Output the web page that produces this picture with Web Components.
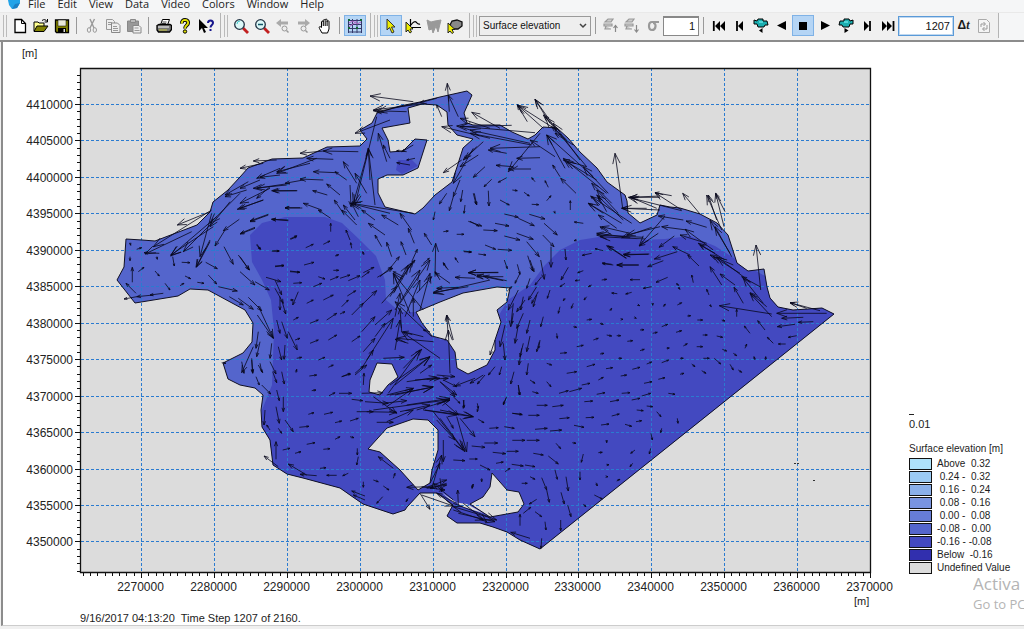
<!DOCTYPE html>
<html lang="en">
<head>
<meta charset="utf-8">
<title>Surface elevation viewer</title>
<style>
html,body{margin:0;height:100%}
body{font-family:"Liberation Sans",Arial,sans-serif;font-size:11px;color:#1c1c1c;background:#f0f0f0}
</style>
</head>
<body>
<result-viewer></result-viewer>
<script>
class Base extends HTMLElement {
  paint(html){ this.attachShadow({mode:'open'}).innerHTML = html; }
}

/* ---------- icons, 16 x 16 ---------- */
const ICONS = {
  new:['New','<path d="M3 1.5h6.500l4 4v9H3z" fill="#fff" stroke="#000" stroke-width="1.300"/><path d="M9.500 1.500v4h4" fill="none" stroke="#000"/>'],
  open:['Open','<path d="M1 13V4h4l1 1h5v3" fill="#ffff90" stroke="#000"/><path d="M1 13.500l3-5.500h11l-4 5.500z" fill="#808000" stroke="#000"/><path d="M9 2.500c2-1.500 4-1 5 1M14.500 1v3h-3" fill="none" stroke="#000"/>'],
  save:['Save','<path d="M1.500 2h13v12.500h-12l-1-1z" fill="#808000" stroke="#000" stroke-width="1.300"/><path d="M4 2h8v6H4z" fill="#e8e8d8" stroke="#000" stroke-width=".5"/><path d="M4 10h8v4.500H4z" fill="#000"/><path d="M9.500 11h1.500v3H9.500z" fill="#ddd"/>'],
  cut:['Cut','<path d="M6 1l4 9M10.500 1L6 10" stroke="#999" stroke-width="1.400" fill="none"/><ellipse cx="5" cy="12" rx="1.700" ry="2.300" fill="none" stroke="#999"/><ellipse cx="10.800" cy="12" rx="1.700" ry="2.300" fill="none" stroke="#999"/>'],
  copy:['Copy','<path d="M1.500 1.500h6l2 2v8h-8z" fill="#eee" stroke="#999"/><path d="M6.500 5h6l2.500 2.500v7H6.500z" fill="#eee" stroke="#888"/><path d="M3 4.500h4M3 6.500h3M8 8.500h4M8 10.500h5M8 12.500h5" stroke="#999"/>'],
  paste:['Paste','<path d="M1.500 3h11v10.500h-11z" fill="#999" stroke="#888"/><path d="M4.500 1.500h5v3h-5z" fill="#bbb" stroke="#888"/><path d="M7 7.500h6l2 2v5.500H7z" fill="#eee" stroke="#888"/><path d="M8.500 10h4M8.500 12.500h5" stroke="#999"/>'],
  print:['Print','<path d="M4.500 7l2-5.500h7l-2 5.500z" fill="#fff" stroke="#000"/><path d="M1 7.500l2-1h11l1.500 1v4l-2 2.500H2.500L1 12z" fill="#777" stroke="#000" stroke-width="1.300"/><path d="M2 9h11" stroke="#fff"/><path d="M6.500 4h4M6 5.500h4" stroke="#000" stroke-width=".7"/><path d="M3 12h8" stroke="#bb4" stroke-width="1.200"/>'],
  help:['Help','<path d="M5 5.500C4.500 2.500 6.500 2 8 2c2.500 0 3.500 1.500 3 3.500C10.500 7.500 8 7.500 8 10.500" fill="none" stroke="#000" stroke-width="3.800"/><path d="M5 5.500C4.500 2.500 6.500 2 8 2c2.500 0 3.500 1.500 3 3.500C10.500 7.500 8 7.500 8 10.500" fill="none" stroke="#e0e000" stroke-width="1.900"/><circle cx="8" cy="13.500" r="1.700" fill="#dd0" stroke="#000"/>'],
  what:['Context help','<path d="M1 1v12l3-3 2 5 2-1-2-4h4z" fill="#000"/><path d="M10 5c0-2 1-2.500 2.500-2.500S15 3.500 15 5c0 2-2.500 2-2.500 4.500M12.500 11v2" fill="none" stroke="#15158c" stroke-width="2"/>'],
  zin:['Zoom in','<path d="M10 10l5 5" stroke="#c22020" stroke-width="2.800"/><circle cx="6.500" cy="6.500" r="4.800" fill="#dcf8f8" stroke="#234" stroke-width="1.300"/><path d="M4 6a3 3 0 0 1 3-3" stroke="#4cc" fill="none"/>'],
  zout:['Zoom out','<path d="M10 10l5 5" stroke="#c22020" stroke-width="2.800"/><circle cx="6.500" cy="6.500" r="4.800" fill="#dcf8f8" stroke="#234" stroke-width="1.300"/><path d="M4 6.500h5" stroke="#156" stroke-width="1.500"/>'],
  zback:['Previous zoom','<path d="M1 5l5-4v2.500h7v3H6V9z" fill="#aaa"/><circle cx="9.500" cy="10.500" r="2.500" fill="#eee" stroke="#999"/><path d="M11.500 12.500l2 2" stroke="#999" stroke-width="1.500"/>'],
  zfwd:['Next zoom','<path d="M14 5L9 1v2.500H2v3h7V9z" fill="#aaa"/><circle cx="7.500" cy="10.500" r="2.500" fill="#eee" stroke="#999"/><path d="M9.500 12.500l2 2" stroke="#999" stroke-width="1.500"/>'],
  hand:['Pan','<path d="M5 15L2.500 10.500C1.500 8.500 3 8 4.500 9.500V4c0-1.200 1.800-1.200 1.800 0V2.500c0-1.200 1.900-1.200 1.900 0V2c0-1.200 1.900-1.200 1.900 0v1.500c0-1 1.900-1 1.900 0V11l-1.500 4z" fill="#fff" stroke="#000"/><path d="M6.300 4v4M8.200 3v5M10.100 3v5" stroke="#000"/>'],
  grid:['Grid','<path d="M1.500 1v14M5.500 1v14M10 1v14M14.500 1v14M1 2.500h14M1 6.500h14M1 10.500h14M1 14h14" stroke="#33386a"/><path d="M2 5l4-2 4 3 4-2M2 9l8-6" stroke="#b35bc0" fill="none"/><path d="M1 1h2v2H1zM13 1h2v2h-2zM1 9h2v2H1zM9 9h2v2H9z" fill="#163"/>'],
  ptr:['Select','<path d="M4 1v11l2.500-2.500L9 15l2-1-2.500-5H12z" fill="#ee0" stroke="#333"/>'],
  series:['Time series','<path d="M5.500 1v10M5 9.500h11M6 7c2-3 4-4 5-3s2 3 4 2" stroke="#000" stroke-width="1.200" fill="none"/><path d="M1 4v10l2-2 2 3 1.500-1-1.500-3h3z" fill="#ee0" stroke="#222"/>'],
  profile:['Profile','<path d="M1 2l4 2 4-1 6-1-3 12-2-6-3 7-1-4-3 1z" fill="#999" stroke="#999"/>'],
  area:['Area','<path d="M3 7l2-4 5-1 5 2v4l-4 3H5z" fill="#888" stroke="#111" stroke-width="1.300"/><path d="M1 5v10l2-2 2 2.500 1.500-1-1.500-3h3z" fill="#ee0" stroke="#222"/>'],
  up:['Layer up','<path d="M2 4l3-3h5L8 4zM1 6h8v2H1zM3 8l-1 3h6" fill="#ccc" stroke="#999" stroke-width="1.200"/><path d="M12.500 14V8M10.500 10l2-2.500 2 2.500" fill="none" stroke="#888" stroke-width="1.200"/>'],
  down:['Layer down','<path d="M2 4l3-3h5L8 4zM1 6h8v2H1zM3 8l-1 3h6" fill="#ccc" stroke="#999" stroke-width="1.200"/><path d="M12.500 7v6M10.500 11.500l2 2.500 2-2.500" fill="none" stroke="#888" stroke-width="1.200"/>'],
  sigma:['Sigma layer','<path d="M14 4H7C3 4 3 12 7 12s5-7 1-7" fill="none" stroke="#999" stroke-width="2.200"/>'],
  first:['First step','<path d="M2.800 3v10" stroke="#000" stroke-width="1.800"/><path d="M9 3v10L4 8zM14 3v10L9 8z"/>'],
  prev:['Previous step','<path d="M5 3v10" stroke="#000" stroke-width="1.800"/><path d="M11 3v10L6 8z"/>'],
  recback:['Record backward','<path d="M1 2l3 1 1-2h5v2h4l1 4h-3l-1 2H5L4 6H1z" fill="#1aaeb0" stroke="#000"/><path d="M6 4h4" stroke="#8ff"/><path d="M9.500 10v5L6 12.500z"/>'],
  rev:['Play backward','<path d="M12 3v9L3 7.500z"/>'],
  stop:['Stop','<path d="M4 4h8v8H4z"/>'],
  play:['Play','<path d="M4 3v9l9-4.500z"/>'],
  recfwd:['Record forward','<path d="M15 2l-3 1-1-2H6v2H2L1 7h3l1 2h6l1-3h3z" fill="#1aaeb0" stroke="#000"/><path d="M6 4h4" stroke="#8ff"/><path d="M6.500 10v5l4-2.500z"/>'],
  next:['Next step','<path d="M11 3v10" stroke="#000" stroke-width="1.800"/><path d="M5 3v10l5-5z"/>'],
  last:['Last step','<path d="M13.500 3v10" stroke="#000" stroke-width="1.800"/><path d="M2 3v10l5-5zM7 3v10l5-5z"/>'],
  refresh:['Refresh','<path d="M2.500 1.500h8l3 3v10h-11z" fill="#f4f4f4" stroke="#aaa"/><path d="M5 9V6h4M7.500 4L9.500 6 7.500 8M11 7v4H7M8.500 9l-2 2 2 2" fill="none" stroke="#999"/>']
};

customElements.define('tool-button', class extends Base {
  connectedCallback(){
    const [label, art] = ICONS[this.getAttribute('icon')];
    const on = this.hasAttribute('active');
    this.paint(`<style>
      :host{display:block;flex:none}
      button{display:grid;place-items:center;width:21px;height:21px;padding:0;border:1px solid transparent;background:none}
      button.on{width:22px;background:#b5d5f5;border-color:#7fb2e6}
      svg{display:block}
    </style><button class="${on?'on':''}" title="${label}" aria-label="${label}"><svg width="16" height="16" viewBox="0 0 16 16">${art}</svg></button>`);
  }
});

customElements.define('tool-group', class extends Base {
  connectedCallback(){
    this.paint(`<style>
      :host{display:flex;align-items:center;flex:none;height:25px;padding-right:4px;border-right:1px solid #b4b4b4}
      .grip{width:2px;height:22px;margin:0 2px 0 3px;border:solid #bbb;border-width:0 1px}
    </style><span class="grip"></span><slot></slot>`);
  }
});

customElements.define('tool-rule', class extends Base {
  connectedCallback(){
    this.paint(`<style>:host{display:block;width:1px;height:17px;margin:0 4px;background:#999}</style>`);
  }
});

customElements.define('menu-bar', class extends Base {
  connectedCallback(){
    const items = ['File','Edit','View','Data','Video','Colors','Window','Help'];
    this.paint(`<style>
      :host{display:block;height:12px;background:#f5f6f7;border-bottom:1px solid #e9e9e9}
      nav{display:flex;gap:12px;height:8px;padding-left:8px}
      svg{display:block;margin-right:-4px}
      button{border:0;padding:0;background:none;font:11px/8px "Open Sans","Noto Sans",sans-serif;color:#222;height:8px;overflow:visible}
    </style><nav><svg width="12" height="9" viewBox="0 0 12 9"><path d="M0 0h12v3L9 8 4 9 1 5z" fill="#22a3e8"/><path d="M4 9L9 8l3-5-5 1z" fill="#1b7fc4"/></svg>${items.map(t=>`<button>${t}</button>`).join('')}</nav>`);
  }
});

customElements.define('tool-bar', class extends Base {
  connectedCallback(){
    const b = s => s.split(' ').map(n => n==='|' ? '<tool-rule></tool-rule>' :
      `<tool-button icon="${n.replace('*','')}" ${n.includes('*')?'active':''}></tool-button>`).join('');
    this.paint(`<style>
      :host{display:flex;height:27px;background:#f5f6f7;border-bottom:2px solid #8c8c8c;overflow:hidden}
      .bar{display:flex;align-items:flex-start;background:#f0f0f0}
      .pick{display:grid;align-items:center;width:112px}
      select,.pick svg{grid-area:1/1}
      select{appearance:none;height:20px;width:112px;padding:0 3px;border:1px solid #9a9a9a;border-radius:0;background:#eee;font:10px "Liberation Sans",Arial,sans-serif;color:#111}
      .pick svg{justify-self:end;margin-right:4px;pointer-events:none}
      input{box-sizing:border-box;height:20px;width:36px;padding:0 3px;border:1px solid #888;border-top-width:2px;background:#fff;font:11px "Liberation Sans",Arial,sans-serif;text-align:right;color:#111}
      .step{width:56px;border:1px solid #5a9ad8;outline:1px solid #c0d8f0;outline-offset:-2px}
      .dt{width:19px;text-align:center;font-size:12px;font-weight:bold}
      i{font-family:"Liberation Serif",serif}
    </style>
    <div class="bar">
      <tool-group>${b('new open save | cut copy paste | print help what')}</tool-group>
      <tool-group>${b('zin zout zback zfwd hand | grid*')}</tool-group>
      <tool-group>${b('ptr* series profile area')}</tool-group>
      <tool-group>
        <div class="pick"><select aria-label="Item"><option>Surface elevation</option></select>
        <svg width="8" height="6" viewBox="0 0 8 6"><path d="M1 1l3 3 3-3" fill="none" stroke="#444" stroke-width="1.500"/></svg></div>
        ${b('| up down sigma')}<input aria-label="Layer" value="1">
        ${b('| first prev recback rev stop* play recfwd next last')}
        <input class="step" aria-label="Time step" value="1207"><span class="dt">Δ<i>t</i></span>${b('refresh')}
      </tool-group>
    </div>`);
  }
});

/* ---------- flow vectors: tiles with an origin; tail and head in thirds of a unit ---------- */
const TILES = [
[100,180,`275 155 135 222,330 95 232 135,335 90 160 200,340 140 212 225,330 180 288 262,335 100 300 230,350 110 212 228,178 220 132 218,90 188 92 196,110 208 125 203,97 307 97 262,115 275 132 262,108 340 78 310,190 340 150 345,160 345 110 350,110 350 72 357,165 273 178 288,195 310 210 330,240 317 252 310,255 288 272 296,292 307 312 310,218 230 223 258,245 247 270 248,170 230 172 238,90 230 90 242,317 247 352 266,325 285 350 312,355 320 412 333,372 200 400 253,415 225 448 270,420 275 465 315,465 305 508 330,498 292 543 305,418 118 370 152,375 150 345 198,505 105 450 125,465 142 422 160,388 350 430 375,415 355 460 388,445 352 485 392,472 405 520 475,475 378 520 475,525 325 550 370,545 360 557 402,545 425 562 475,565 455 592 510,475 455 468 505,480 485 470 530,460 500 425 578,455 535 458 578,475 555 488 578,555 495 552 538,515 490 510 535,510 545 528 582,595 335 578 375,470 195 480 208,515 213 537 213,525 260 552 257,572 178 590 170,570 275 598 277,570 10 470 25,592 32 520 33,510 20 470 55,490 60 412 88,440 30 375 50,390 65 330 140,420 40 330 130,330 185 290 260,335 130 250 215,445 5 375 45,600 83 555 83,565 120 515 118,365 548 378 550`],
[240,80,`520 65 390 48,500 95 400 92,540 68 410 95,590 55 540 68,560 70 400 90,450 120 345 160,410 110 345 375,385 210 340 370,440 245 415 160,450 400 330 370,520 400 335 370,330 315 333 380,355 410 335 370,405 375 385 205,390 300 385 205,350 310 310 245,380 340 345 280,450 235 430 195,655 110 625 45,628 95 622 10,605 110 590 75,500 215 470 212,520 195 485 215,525 235 500 240,510 255 470 248,355 215 250 213,260 212 180 220,280 238 200 235,230 235 110 280,210 250 110 275,110 240 40 243,70 250 0 265,120 285 60 292,290 278 220 275,320 300 285 275,250 300 180 297,190 300 135 310,140 315 40 325,170 332 95 332,262 345 218 332,300 345 260 312,310 400 283 360,350 435 305 390,345 420 310 375,405 420 365 390,475 435 425 405,435 465 385 430,425 500 405 465,455 530 440 487,515 450 480 400,523 490 505 445,498 525 483 485,245 390 190 370,272 415 235 390,272 455 272 430,330 480 318 450,335 505 332 488,187 384 135 384,145 422 95 418,85 403 30 423,45 445 0 462,50 492 62 508,97 513 118 513,150 477 170 467,197 503 220 493,250 493 270 483,285 528 296 524,372 525 368 515,105 558 132 556,192 555 222 547,150 573 180 577,235 590 255 597,280 571 296 571,300 595 330 585,370 578 402 562,420 590 455 560,450 565 478 530,550 550 568 535,515 545 532 508,585 590 587 490,575 495 553 460,500 570 525 540,480 600 520 545,490 590 460 575,600 600 585 575,0 530 28 570,120 265 50 295,60 300 0 325,90 325 0 370,70 360 0 385,610 455 625 453,650 463 672 463,690 424 716 438,672 515 693 517,655 548 645 533,625 570 610 548,700 340 708 372,675 375 672 400,668 330 662 365,640 350 628 392,660 300 640 350,585 395 580 420,620 340 598 372,665 240 610 278,700 205 640 310,715 225 660 260`],
[440,80,`215 136 60 140,180 145 95 97,150 145 60 115,150 175 5 140,285 158 50 138,270 190 90 150,275 195 90 160,300 200 150 205,200 220 145 210,345 230 270 180,300 160 205 275,273 267 205 267,300 233 230 235,220 260 168 256,310 145 232 75,262 125 232 75,350 150 232 75,330 130 285 58,350 150 285 58,360 155 310 105,380 180 335 140,400 195 345 160,440 260 315 110,420 240 340 130,460 290 320 165,375 265 320 165,440 260 370 240,500 340 370 235,470 300 380 245,360 290 338 255,408 340 362 295,505 340 430 260,515 370 455 310,480 375 452 348,500 395 475 350,550 420 470 345,545 430 445 370,490 400 445 370,575 430 455 350,530 445 475 405,570 460 485 440,515 465 480 440,550 470 470 460,610 472 470 465,548 385 525 220,535 400 470 330,620 385 545 385,660 390 545 385,660 352 568 352,650 385 572 352,558 535 500 497,625 523 550 523,597 555 530 555,515 553 487 549,655 460 598 498,660 440 560 465,490 512 465 506,455 520 427 526,430 572 413 578,430 430 403 426,391 390 391 362,320 362 333 347,325 322 315 302,285 305 275 293,200 293 175 307,155 298 132 320,135 260 100 292,103 340 110 375,145 332 147 378,180 360 208 375,217 330 232 332,252 337 268 348,275 373 296 374,193 402 235 412,268 403 315 417,235 415 283 437,312 430 352 465,165 430 207 438,85 424 125 438,130 450 172 452,230 460 280 478,193 468 240 480,308 465 342 500,260 485 298 530,333 500 333 562,375 507 378 540,135 495 167 508,173 508 215 511,70 513 95 516,115 522 138 525,263 527 278 573,302 540 313 598,193 540 202 566,232 553 240 583,385 562 363 600,175 577 85 578,190 590 110 590,130 185 75 235,110 200 70 240,343 395 345 400,410 480 402 482`],
[600,140,`245 212 85 172,180 168 90 172,215 167 165 158,245 210 165 158,300 222 248 160,365 270 320 165,372 260 347 160,350 240 325 165,375 215 347 160,155 262 65 293,135 297 0 290,195 228 118 317,250 240 175 228,260 270 185 260,320 262 258 243,223 288 177 322,148 342 72 345,115 375 52 375,40 375 8 371,80 355 25 318,232 335 163 357,190 362 143 380,270 345 218 320,297 378 263 345,320 310 240 285,340 330 255 268,345 340 300 315,375 360 295 310,390 340 330 240,395 350 345 260,400 375 330 345,420 400 340 350,450 425 350 350,365 435 330 380,405 435 360 402,430 490 402 442,480 440 425 410,490 490 430 415,500 500 450 458,515 530 450 460,482 450 468 315,280 428 275 405,327 465 320 448,120 419 90 419,203 412 168 427,155 440 130 445,95 457 77 462,52 461 35 459,232 495 245 488,190 500 196 492,228 430 236 436,235 442 240 448,330 495 334 500,115 495 119 497,65 538 69 538,105 533 109 535,30 512 35 505,158 490 158 496,515 522 358 497,620 505 570 488,660 512 570 488,680 520 530 520,610 532 545 535,640 545 595 547,585 553 532 560,590 587 565 592,557 612 535 612,520 610 502 592,495 570 473 542,450 580 433 558,410 530 410 508,185 560 203 553,158 580 172 577,228 577 245 572,120 570 132 569,262 528 272 527,292 540 308 540,365 540 375 543,250 618 262 611,290 620 308 620,200 625 208 624,120 632 133 628,82 604 98 602,50 587 62 587,367 628 380 633,350 588 368 592,308 585 322 585,185 668 206 660,240 655 250 655,310 655 328 655,343 655 362 672,390 673 400 690,140 672 155 666,97 688 120 682,55 655 65 655,18 686 38 683,62 708 80 705,175 718 195 713,305 692 318 700,240 703 252 700,435 625 440 612,497 660 497 650,400 640 410 647,465 660 462 650,415 690 425 697,275 672 285 680,0 642 12 640,0 550 10 553,20 585 35 588,5 420 20 418`],
[340,260,`25 62 60 47,22 108 47 92,65 52 88 35,112 52 158 25,65 135 110 92,35 165 70 130,0 162 15 155,65 215 105 170,105 195 155 150,35 245 60 228,70 275 105 235,45 340 70 318,65 325 100 270,105 230 135 190,80 300 160 175,5 350 32 342,125 130 170 80,160 100 215 10,165 150 240 30,150 110 205 15,180 130 270 0,165 170 180 100,250 150 160 40,210 160 160 40,275 230 165 125,185 215 180 145,165 270 180 180,220 170 220 115,195 170 240 60,240 150 270 40,280 245 170 235,250 230 190 215,300 295 185 215,205 250 165 238,230 100 275 50,330 70 285 38,270 215 250 210,330 340 325 210,340 240 320 165,325 230 320 165,475 38 385 38,405 55 345 52,490 62 410 45,500 62 430 48,450 60 280 100,385 80 280 97,355 82 290 85,320 25 310 10,130 295 193 292,145 400 240 270,150 375 270 290,165 375 270 290,190 325 245 268,225 360 300 355,240 340 275 315,290 345 345 350,405 355 345 378,300 365 345 410,140 440 220 385,165 405 280 380,200 435 330 415,70 375 72 340,430 345 390 370,435 345 412 372,485 320 478 345,465 320 445 345,490 250 495 300,465 240 450 285,500 95 515 80,535 90 505 150,555 120 530 155,590 80 565 120,595 95 575 130,520 130 512 200,550 160 530 205,535 195 525 250,495 195 480 260,520 160 515 190,570 228 560 275,545 265 537 315,598 245 590 275,522 335 512 372,565 310 560 345,535 375 540 405,500 410 490 432,370 420 373 442,412 430 415 445,570 0 582 35,540 40 525 70`],
[240,360,`5 5 12 40,35 0 38 40,60 10 65 35,48 50 58 75,65 75 92 102,98 35 110 68,125 35 133 72,110 90 118 122,130 110 130 155,108 140 118 190,135 180 160 215,75 150 72 195,108 298 108 245,128 270 150 265,165 280 183 275,205 163 222 158,252 163 278 157,178 202 207 199,200 253 225 248,285 188 305 183,330 183 355 175,285 238 300 230,250 268 270 266,297 100 335 100,335 118 368 122,215 92 228 90,267 107 285 98,208 48 230 45,305 50 330 40,265 22 280 15,345 45 380 15,168 38 170 28,330 230 342 233,352 265 352 285,355 290 350 315,365 100 428 98,350 155 400 155,380 155 470 157,400 110 470 160,375 125 445 130,430 130 500 122,440 105 520 85,450 105 578 82,440 185 520 150,410 187 460 187,480 155 570 135,400 150 620 120,530 150 630 120,590 130 630 120,555 150 700 170,550 150 650 165,600 150 700 170,500 65 590 52,560 58 625 55,610 60 650 80,600 65 650 105,640 110 660 130,610 125 655 165,580 155 670 270,600 175 675 275,620 170 640 205,650 170 680 275,660 175 705 230,590 180 645 240,610 240 610 305,672 120 670 145,715 140 712 155,715 178 732 188,748 205 775 203,793 200 823 205,817 160 845 163,817 241 855 241,860 241 898 241,733 249 773 249,695 258 735 262,640 300 675 302,688 297 712 297,758 277 797 281,800 274 835 274,720 315 750 330,768 310 790 306,815 313 850 318,855 315 885 320,200 345 145 312,230 347 180 343,240 325 258 323,290 346 260 346,325 340 308 347,115 320 72 288,115 205 125 220,90 210 80 195,400 360 415 365,430 378 447 390,460 355 465 340,370 365 370 382,460 325 415 290,375 408 335 393,375 420 340 405,428 410 410 430,505 415 498 425,540 400 570 448,580 380 500 382,545 405 640 438,570 370 600 310,575 385 605 285,565 380 620 360,560 385 620 375,545 380 615 390,640 420 580 370,650 430 590 400,600 355 605 395,640 430 770 480,670 430 740 485,640 450 730 480,655 460 765 485,655 435 653 390,740 470 640 440,620 370 570 385,695 385 700 372`],
[440,380,`290 76 322 76,337 80 370 76,357 40 385 32,388 35 425 25,433 65 458 63,470 43 495 38,545 40 570 38,510 65 537 60,605 48 632 40,612 10 636 5,575 60 600 55,590 90 610 92,515 108 538 102,437 113 462 112,358 116 388 113,402 136 432 142,483 135 507 132,555 133 575 139,588 125 605 122,330 153 365 150,285 148 322 145,217 100 247 104,265 106 298 106,650 95 663 110,620 78 638 80,665 145 662 158,633 160 637 180,632 205 628 222,585 210 572 220,500 180 500 188,397 188 408 190,348 190 362 206,280 220 310 225,325 228 355 252,430 222 424 247,420 275 420 300,345 270 352 298,378 290 385 333,305 293 320 330,320 330 328 367,363 337 373 372,383 375 393 410,270 290 285 298,315 425 318 450,362 420 362 452,285 395 305 410,240 437 240 403,250 400 272 382,290 358 268 372,245 310 262 310,270 475 212 457,305 475 303 505,475 218 487 217,468 308 472 318,463 345 487 357,430 373 438 380,578 250 570 260,530 303 540 298,500 255 507 254,125 295 125 305,97 315 97 325,195 275 210 265,685 40 705 43,712 115 714 130,235 15 238 45,277 35 295 40,198 55 190 75,320 5 333 20,500 290 504 290`],
[510,270,`60 25 50 55,95 20 75 45,40 80 32 120,80 75 70 110,120 60 112 85,165 40 150 50,210 30 195 32,60 150 50 190,100 140 92 170,150 110 145 130,190 100 184 115,230 80 222 90,40 220 30 260,90 210 86 235,140 190 142 205,190 170 200 172,230 150 245 148,110 280 125 285,150 250 170 248,200 230 220 226,250 210 265 205,170 310 200 305,230 290 255 283,60 330 75 340,215 345 240 340,265 330 280 322,245 45 235 50,165 85 160 92`],
[270,270,`15 30 35 75,30 80 30 120,70 40 95 38,130 50 155 40,180 30 205 20,60 90 70 90,110 100 130 90,160 90 190 75,20 150 30 190,70 150 85 142,120 160 145 150,170 150 200 130,215 110 235 90,25 230 35 270,75 210 90 205,120 220 145 210,175 210 200 195,80 265 95 262,145 270 165 262`]
];

const pts = a => a.trim().split(/\s+/).map(p => p.replace(',', ' ')).join(' L');
const COAST = '126,239 142,240 155,241 197,225 210,212 213,202 228,190 240,177 248,168 272,159 303,158 327,147 360,146 367,139 360,130 372,123 377,113 400,106 420,102 440,97 467,91 472,95 464,113 467,123 473,125 500,125 512,132 528,139 535,135 543,127 557,128 568,138 580,152 597,168 607,182 625,195 627,201 628,213 640,223 657,215 660,205 670,207 680,208 700,214 717,223 728,235 737,263 748,271 764,269 767,287 770,298 778,307 793,310 822,308 834,314 540,549 520,540 507,532 493,527 480,523 457,523 447,516 453,505 437,493 420,493 407,507 405,510 393,514 363,504 350,495 340,488 303,478 287,474 273,465 270,440 262,427 261,410 263,395 255,388 240,385 228,379 223,363 243,353 252,342 253,323 245,310 208,290 190,289 178,296 135,303 117,280 124,267';
const ISLANDS = [
  '410,123 408,108 422,104 437,105 447,112 448,125 457,135 473,139 463,148 457,167 452,182 435,195 423,208 415,214 385,207 378,193 378,179 387,175 403,175 418,168 427,140 415,139 403,151 390,152 388,140 382,128',
  '416,312 440,302 463,293 497,287 510,288 507,302 497,310 501,322 495,340 495,350 487,365 468,374 457,368 455,352 447,340 432,336 422,323',
  '377,363 392,364 398,377 388,385 380,395 369,392 370,380',
  '368,449 387,428 413,419 428,420 438,430 438,450 432,470 430,483 418,490 400,470 380,452',
  '492,473 507,490 519,492 524,504 518,512 490,517 470,504 483,497 490,487'
];

customElements.define('flow-map', class extends Base {
  connectedCallback(){
    let grid = '', ticks = '', labels = '', vec = '';
    for (let i = 0; i < 11; i++) {
      const x = Math.round(141 + i * 72.9) + .5;
      if (i < 10) grid += `M${x} 68V572`;
      labels += `<text x="${x - 1}" y="591" text-anchor="middle">${2270000 + i * 10000}</text>`;
    }
    for (let i = 0; i < 13; i++) {
      const y = Math.round(104 + i * 36.45) + .5;
      grid += `M81 ${y}H870`;
      labels += `<text x="73" y="${y + 4}" text-anchor="end">${4410000 - i * 5000}</text>`;
    }
    for (let i = -8; i <= 100; i++) ticks += `M${Math.round(141 + i * 7.29) + .5} 572v${i % 10 ? 4 : 6}`;
    for (let i = -4; i <= 64; i++) ticks += `M81 ${Math.round(104 + i * 7.29) + .5}h${i % 5 ? -4 : -6}`;
    for (const [ox, oy, list] of TILES) for (const s of list.split(',')) {
      const [a, b, c, d] = s.split(' ').map((v, k) => +v / 3 + (k % 2 ? oy : ox));
      const len = Math.hypot(c - a, d - b), t = Math.atan2(d - b, c - a), h = Math.min(Math.max(len * .27, 2.5), 11), w = .34;
      const f = v => v.toFixed(1);
      vec += `M${f(a)} ${f(b)}L${f(c)} ${f(d)}M${f(c - h * Math.cos(t - w))} ${f(d - h * Math.sin(t - w))}L${f(c)} ${f(d)}L${f(c - h * Math.cos(t + w))} ${f(d - h * Math.sin(t + w))}`;
    }
    this.paint(`<style>
      :host{display:block}
      svg{display:block;width:100%;height:auto}
      text{font:12px "Liberation Sans",Arial,sans-serif;fill:#222}
      .unit{font-size:11px}
    </style>
    <svg viewBox="3 42 897 570" role="img" aria-label="Surface elevation with flow vectors">
      <defs><clipPath id="sea"><path d="M${pts(COAST)}Z"/></clipPath></defs>
      <path d="M81 68H870V572H81z" fill="#dcdcdc"/>
      <path d="M${pts(COAST)}Z" fill="#5465cc"/>
      <g clip-path="url(#sea)" fill="#4349c0">
        <path d="M250 235L262 223L285 217L325 217L342 223L360 240L376 256L385 280L386 300L400 312L416 312L440 340L490 330L508 300L530 285L545 265L560 250L580 240L605 236L625 235L640 240L665 239L690 236L715 246L740 262L790 290L850 300L850 570L250 570L262 410L272 385L274 330L271 300L262 280L252 262Z"/>
        <path d="M398 160l14 0l6 6l-16 8l-6-4z"/>
      </g>
      <path d="M${ISLANDS.map(pts).join('ZM')}Z" fill="#dcdcdc"/>
      <path d="M441 492l12 10 14 2 16 9-20-6z" fill="#dcdcdc"/>
      <path d="${grid}" fill="none" stroke="#2a7bd0" stroke-dasharray="3 2"/>
      <path d="M${pts(COAST)}ZM${ISLANDS.map(pts).join('ZM')}Z" fill="none" stroke="#101025"/>
      <path d="${vec}" fill="none" stroke="#08081c" stroke-width=".8" stroke-linejoin="bevel"/>
      <path d="M794 463.500h2M797 463.500h2M813 480.500h2" stroke="#333"/>
      <path d="M80.500 68.500H870.500V572.500H80.500z" fill="none" stroke="#111" stroke-width="1.300"/>
      <path d="${ticks}" stroke="#111"/>
      ${labels}
      <text class="unit" x="22" y="57">[m]</text>
      <text class="unit" x="854" y="605">[m]</text>
    </svg>`);
  }
});

customElements.define('map-legend', class extends Base {
  connectedCallback(){
    const rows = [['#aee2fb','Above  0.32'],['#9ccbf4',' 0.24 -  0.32'],['#8bb0ea',' 0.16 -  0.24'],['#7994e0',' 0.08 -  0.16'],['#667cd6',' 0.00 -  0.08'],['#5465cc','-0.08 -  0.00'],['#4349c0','-0.16 - -0.08'],['#312fae','Below  -0.16'],['#dcdcdc','Undefined Value']];
    this.paint(`<style>
      :host{display:block;font-size:10px;line-height:13px;white-space:pre}
      .scale{display:block;font-size:11px;margin-bottom:11px}
      .scale::before{content:"";display:block;width:5px;height:1px;background:#222;margin-bottom:3px}
      h2{margin:0 0 2px;font:inherit}
      ul{list-style:none;margin:0;padding:0}
      li{display:flex;align-items:center;gap:5px;height:13px}
      .key{box-sizing:border-box;width:23px;height:12px;border:1px solid #111}
    </style><span class="scale">0.01</span><h2>Surface elevation [m]</h2><ul>${rows.map(([c,t])=>`<li><span class="key" style="background:${c}"></span><span>${t}</span></li>`).join('')}</ul>`);
  }
});

customElements.define('result-viewer', class extends Base {
  connectedCallback(){
    this.paint(`<style>
      :host{display:flex;flex-direction:column;min-height:100%;position:relative}
      main{background:#fff;margin-left:1px;border-left:2px solid #8c8c8c;border-bottom:1px solid #ccc}
      .row{display:flex}
      flow-map{flex:1;min-width:0}
      map-legend{flex:none;width:115px;padding-left:9px;align-self:flex-end;margin-bottom:38px}
      .status{margin:0;padding-left:77px;line-height:13px;white-space:pre}
      .mark{position:absolute;right:0;width:51px;bottom:15px;overflow:hidden;white-space:nowrap;color:#b4b4b4;font:13px/20px "Open Sans",sans-serif}
      .mark b{display:block;font-weight:normal;font-size:17px}
    </style>
    <menu-bar></menu-bar>
    <tool-bar></tool-bar>
    <main>
      <div class="row"><flow-map></flow-map><map-legend></map-legend></div>
      <p class="status">9/16/2017 04:13:20  Time Step 1207 of 2160.</p>
    </main>
    <div class="mark"><b>Activa</b>Go to PC</div>`);
  }
});
</script>
</body>
</html>
